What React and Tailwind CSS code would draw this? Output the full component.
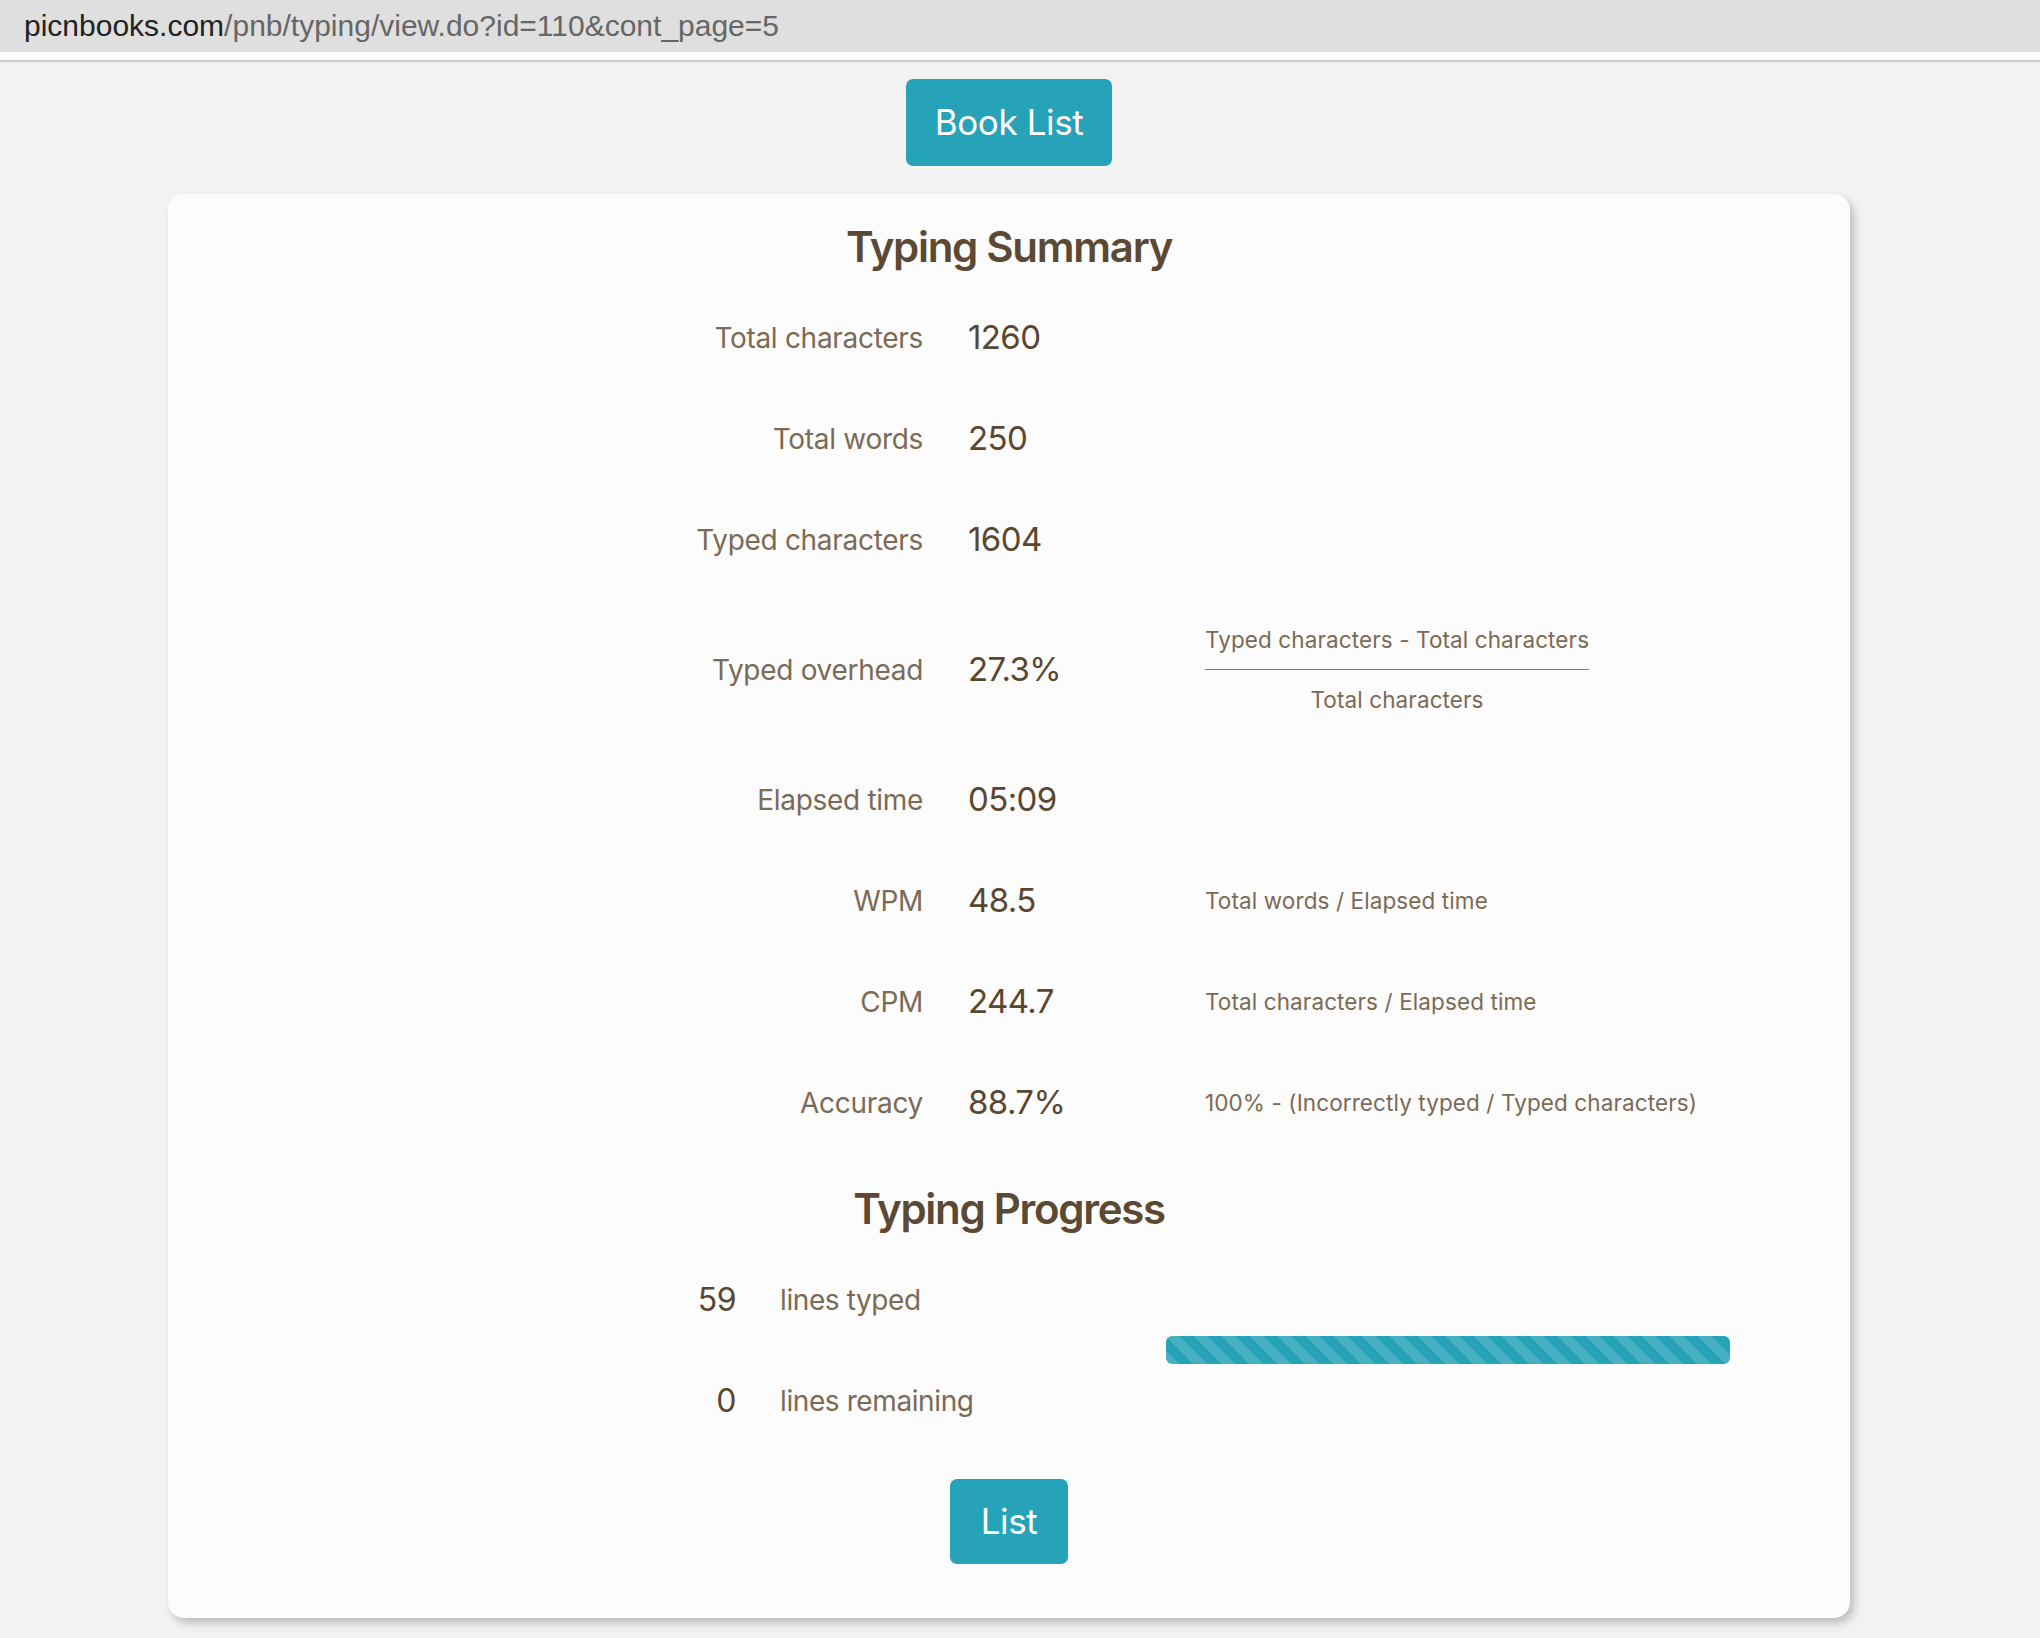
import React from "react";

const summary = [
  { label: "Total characters", value: "1260" },
  { label: "Total words", value: "250" },
  { label: "Typed characters", value: "1604" },
  { label: "Typed overhead", value: "27.3%", fraction: true },
  { label: "Elapsed time", value: "05:09" },
  { label: "WPM", value: "48.5", formula: "Total words / Elapsed time" },
  { label: "CPM", value: "244.7", formula: "Total characters / Elapsed time" },
  { label: "Accuracy", value: "88.7%", formula: "100% - (Incorrectly typed / Typed characters)" },
];

const App = () => {
  return (
    <div className="min-h-screen bg-[#f2f2f2] font-['Inter',sans-serif]">
      {/* Address bar */}
      <div className="h-[52px] bg-[#dfdfdf] pl-[24px] font-['Liberation_Sans',Arial,sans-serif] text-[30px] leading-[52px] text-[#666666]">
        <span className="text-[#222222]">picnbooks.com</span>/pnb/typing/view.do?id=110&amp;cont_page=5
      </div>
      <div className="h-[8px] bg-white" />
      <div className="h-[2px] bg-[#cbcbcb]" />

      <div className="w-[2018px] flex flex-col items-center">
        <button className="mt-[17px] w-[206px] h-[87px] rounded-[7px] bg-[#26a3b8] text-white text-[35px] tracking-[-0.4px]">
          Book List
        </button>

        {/* Summary card */}
        <div className="mt-[28px] w-[1682px] rounded-[16px] bg-[#fcfcfc] pt-[27px] pb-[54px] shadow-[4px_5px_8px_rgba(0,0,0,0.22)]">
          <h2 className="text-center text-[42px] leading-[52px] font-semibold tracking-[-1.3px] text-[#5b4933]">
            Typing Summary
          </h2>

          <div className="mt-[14px] pl-[315px]">
            {summary.map((row) => (
              <div
                key={row.label}
                className={`flex items-center ${row.fraction ? "h-[159px]" : "h-[101px]"}`}
              >
                <div className="w-[440px] text-right text-[28px] tracking-[-0.3px] text-[#7b6a56]">{row.label}</div>
                <div className="ml-[45px] w-[237px] text-[33px] tracking-[-0.6px] text-[#5a4731]">{row.value}</div>
                {row.fraction && (
                  <div className="text-[22.5px] leading-[30px] tracking-[0.1px] text-[#7b6a56] text-center">
                    <div className="pb-[14px] border-b border-[#8a7a68]">Typed characters - Total characters</div>
                    <div className="pt-[15px]">Total characters</div>
                  </div>
                )}
                {row.formula && (
                  <div className="text-[22.5px] tracking-[0.1px] text-[#7b6a56]">{row.formula}</div>
                )}
              </div>
            ))}
          </div>

          <h2 className="mt-[30px] text-center text-[42px] leading-[52px] font-semibold tracking-[-1.3px] text-[#5b4933]">
            Typing Progress
          </h2>

          <div className="mt-[14px] pl-[488px] flex items-center">
            <div className="w-[510px]">
              <div className="flex items-center h-[101px]">
                <div className="w-[80px] text-right text-[32px] tracking-[-0.5px] text-[#5a4731]">59</div>
                <div className="ml-[44px] text-[28px] tracking-[-0.4px] text-[#7b6a56]">lines typed</div>
              </div>
              <div className="flex items-center h-[101px]">
                <div className="w-[80px] text-right text-[32px] tracking-[-0.5px] text-[#5a4731]">0</div>
                <div className="ml-[44px] text-[28px] tracking-[-0.4px] text-[#7b6a56]">lines remaining</div>
              </div>
            </div>
            <div className="w-[564px] h-[28px] rounded-[6px] bg-[#26a3b8] bg-[linear-gradient(45deg,rgba(255,255,255,.15)_25%,transparent_25%,transparent_50%,rgba(255,255,255,.15)_50%,rgba(255,255,255,.15)_75%,transparent_75%,transparent)] bg-[length:28px_28px]" />
          </div>

          <div className="mt-[28px] flex justify-center">
            <button className="w-[118px] h-[85px] rounded-[7px] bg-[#26a3b8] text-white text-[35px] tracking-[-0.4px]">
              List
            </button>
          </div>
        </div>
      </div>
    </div>
  );
};

export default App;
